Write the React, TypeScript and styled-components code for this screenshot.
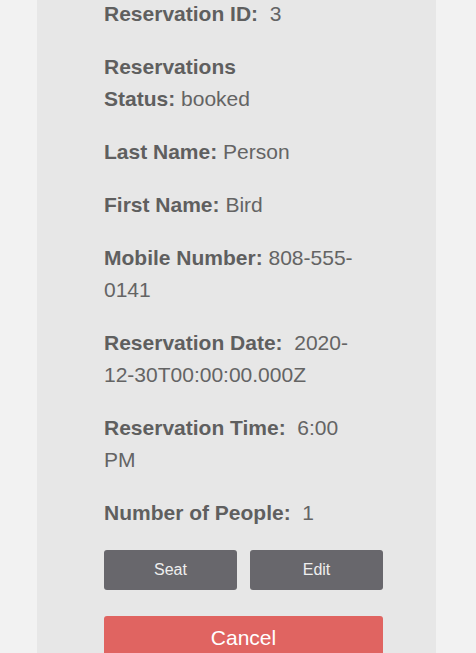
import React from "react";
import styled, { createGlobalStyle } from "styled-components";

const GlobalStyle = createGlobalStyle`
  html, body {
    margin: 0;
    padding: 0;
    background-color: #f2f2f2;
    font-family: "Liberation Sans", Arial, Helvetica, sans-serif;
    overflow: hidden;
  }
`;

const Page = styled.div`
  display: flex;
  padding-left: 37px;
  min-height: 653px;
`;

const Card = styled.div`
  width: 399px;
  margin-top: -23px;
  padding: 0 0 40px 67px;
  box-sizing: border-box;
  background-color: #e7e7e7;
`;

const Details = styled.div`
  max-width: 265px;
`;

const Field = styled.p`
  margin: 21px 0;
  font-size: 21px;
  line-height: 32px;
  color: #646464;
`;

const Label = styled.b`
  font-weight: 700;
  color: #5f5f5f;
`;

const ButtonRow = styled.div`
  display: grid;
  grid-template-columns: 133px 133px;
  column-gap: 13px;
  margin-top: 21px;
`;

const ActionButton = styled.button<{ $variant?: "dark" | "danger" }>`
  height: ${({ $variant }) => ($variant === "danger" ? "44px" : "40px")};
  border: none;
  border-radius: 3px;
  background-color: ${({ $variant }) => ($variant === "danger" ? "#e06461" : "#68676c")};
  color: ${({ $variant }) => ($variant === "danger" ? "#ffffff" : "#eeeeee")};
  font-family: "Liberation Sans", Arial, Helvetica, sans-serif;
  font-size: ${({ $variant }) => ($variant === "danger" ? "21px" : "16px")};
  padding: 0;
  cursor: pointer;
`;

const CancelButton = styled(ActionButton)`
  display: block;
  width: 279px;
  margin-top: 26px;
`;

const reservation = {
  reservation_id: 3,
  status: "booked",
  last_name: "Person",
  first_name: "Bird",
  mobile_number: "808-555-0141",
  reservation_date: "2020-12-30T00:00:00.000Z",
  reservation_time: "6:00 PM",
  people: 1,
};

export default function App() {
  const r = reservation;

  return (
    <>
      <GlobalStyle />
      <Page>
        <Card>
          <Details>
            <Field>
              <Label>Reservation ID:</Label>&nbsp; {r.reservation_id}
            </Field>
            <Field>
              <Label>Reservations Status:</Label>&nbsp;{r.status}
            </Field>
            <Field>
              <Label>Last Name:</Label> {r.last_name}
            </Field>
            <Field>
              <Label>First Name:</Label> {r.first_name}
            </Field>
            <Field>
              <Label>Mobile Number:</Label> {r.mobile_number}
            </Field>
            <Field>
              <Label>Reservation Date:</Label>&nbsp; {r.reservation_date}
            </Field>
            <Field>
              <Label>Reservation Time:</Label>&nbsp; {r.reservation_time}
            </Field>
            <Field>
              <Label>Number of People:</Label>&nbsp; {r.people}
            </Field>
          </Details>
          <ButtonRow>
            <ActionButton>Seat</ActionButton>
            <ActionButton>Edit</ActionButton>
          </ButtonRow>
          <CancelButton $variant="danger">Cancel</CancelButton>
        </Card>
      </Page>
    </>
  );
}
